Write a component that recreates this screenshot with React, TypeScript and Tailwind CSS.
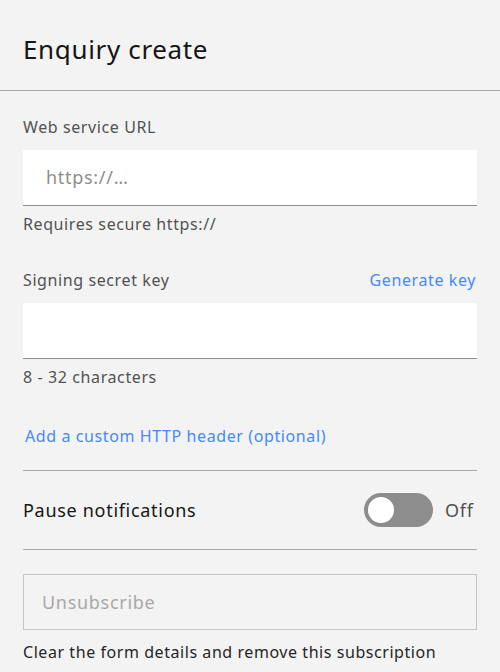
const App = () => {
  return (
    <div
      className="min-h-screen w-[500px] bg-[#f3f3f3] text-[#161616]"
      style={{ fontFamily: '"Noto Sans", "DejaVu Sans", Arial, sans-serif' }}
    >
      {/* Header */}
      <div className="flex h-[91px] items-center border-b border-[#a8a8a8] px-[23px] pt-[8px]">
        <h1 className="text-[26px] font-normal leading-none tracking-[0.65px] text-[#161616]">Enquiry create</h1>
      </div>

      <div className="px-[23px]">
        {/* Web service URL */}
        <div className="pt-[24px]">
          <label className="block text-[16px] leading-[24px] tracking-[0.6px] text-[#525252]">Web service URL</label>
          <div className="mt-[11px] flex h-[56px] items-center border-b border-[#8d8d8d] bg-white pl-[23px]">
            <span className="text-[18px] tracking-[0.7px] text-[#8d8d8d]">https://…</span>
          </div>
          <p className="mt-[6px] text-[16px] leading-[24px] tracking-[0.6px] text-[#525252]">Requires secure https://</p>
        </div>

        {/* Signing secret key */}
        <div className="pt-[32px]">
          <div className="flex items-center justify-between">
            <label className="text-[16px] leading-[24px] tracking-[0.6px] text-[#525252]">Signing secret key</label>
            <a className="pr-[1px] text-[16px] leading-[24px] tracking-[0.6px] text-[#4589ff]">Generate key</a>
          </div>
          <div className="mt-[11px] h-[56px] border-b border-[#8d8d8d] bg-white" />
          <p className="mt-[6px] text-[16px] leading-[24px] tracking-[0.6px] text-[#525252]">8 - 32 characters</p>
        </div>

        {/* Custom header */}
        <div className="border-b border-[#a8a8a8] pt-[35px] pb-[22px]">
          <a className="block pl-[2px] text-[16px] leading-[24px] tracking-[0.6px] text-[#4589ff]">
            Add a custom HTTP header (optional)
          </a>
        </div>

        {/* Pause notifications */}
        <div className="flex h-[79px] items-center justify-between border-b border-[#a8a8a8]">
          <span className="text-[18px] tracking-[0.7px] text-[#161616]">Pause notifications</span>
          <div className="flex items-center gap-[12px]">
            <div className="flex h-[34px] w-[69px] items-center rounded-full bg-[#8d8d8d] px-[4px]">
              <div className="h-[26px] w-[26px] rounded-full bg-white" />
            </div>
            <span className="w-[32px] text-[18px] tracking-[0.7px] text-[#525252]">Off</span>
          </div>
        </div>

        {/* Unsubscribe */}
        <div className="pt-[24px]">
          <button className="flex h-[56px] w-full items-center border border-[#c6c6c6] pl-[18px] text-[18px] tracking-[0.7px] text-[#a8a8a8]">
            Unsubscribe
          </button>
          <p className="mt-[10px] text-[16px] leading-[24px] tracking-[0.56px] text-[#262626]">
            Clear the form details and remove this subscription
          </p>
        </div>
      </div>
    </div>
  );
};

export default App;
